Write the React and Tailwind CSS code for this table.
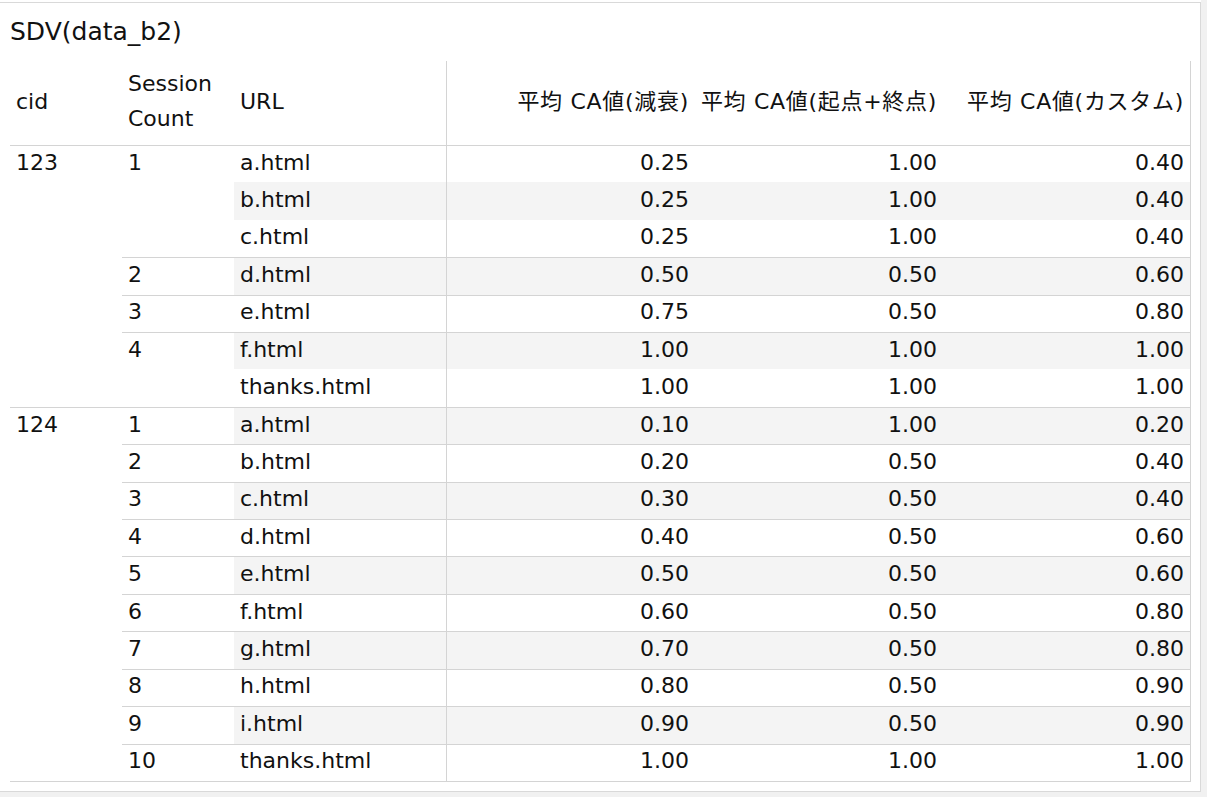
import React from "react";

const data = [
  {
    cid: "123",
    sessions: [
      { s: "1", rows: [["a.html", "0.25", "1.00", "0.40"], ["b.html", "0.25", "1.00", "0.40"], ["c.html", "0.25", "1.00", "0.40"]] },
      { s: "2", rows: [["d.html", "0.50", "0.50", "0.60"]] },
      { s: "3", rows: [["e.html", "0.75", "0.50", "0.80"]] },
      { s: "4", rows: [["f.html", "1.00", "1.00", "1.00"], ["thanks.html", "1.00", "1.00", "1.00"]] },
    ],
  },
  {
    cid: "124",
    sessions: [
      { s: "1", rows: [["a.html", "0.10", "1.00", "0.20"]] },
      { s: "2", rows: [["b.html", "0.20", "0.50", "0.40"]] },
      { s: "3", rows: [["c.html", "0.30", "0.50", "0.40"]] },
      { s: "4", rows: [["d.html", "0.40", "0.50", "0.60"]] },
      { s: "5", rows: [["e.html", "0.50", "0.50", "0.60"]] },
      { s: "6", rows: [["f.html", "0.60", "0.50", "0.80"]] },
      { s: "7", rows: [["g.html", "0.70", "0.50", "0.80"]] },
      { s: "8", rows: [["h.html", "0.80", "0.50", "0.90"]] },
      { s: "9", rows: [["i.html", "0.90", "0.50", "0.90"]] },
      { s: "10", rows: [["thanks.html", "1.00", "1.00", "1.00"]] },
    ],
  },
];

const spanClass = {
  1: "row-span-1",
  2: "row-span-2",
  3: "row-span-3",
  7: "row-span-7",
  10: "row-span-10",
};

export default function App() {
  const cells = [];
  let rowIndex = 0;
  data.forEach((g) => {
    const total = g.sessions.reduce((a, s) => a + s.rows.length, 0);
    cells.push(
      <div key={"cid" + g.cid} className={`col-start-1 ${spanClass[total]} border-t border-[#d4d4d4] pl-[6px]`}>
        <div className="h-[36.41px] flex items-center pb-[4px]">{g.cid}</div>
      </div>
    );
    g.sessions.forEach((sess) => {
      cells.push(
        <div key={"s" + g.cid + sess.s} className={`col-start-2 ${spanClass[sess.rows.length]} border-t border-[#d4d4d4] pl-[6px]`}>
          <div className="h-[36.41px] flex items-center pb-[4px]">{sess.s}</div>
        </div>
      );
      sess.rows.forEach((r, i) => {
        const band = rowIndex % 2 === 1 ? "bg-[#f4f4f4]" : "bg-white";
        const top = i === 0 ? "border-t border-[#d4d4d4]" : "";
        const k = "r" + rowIndex;
        cells.push(
          <div key={k + "u"} className={`col-start-3 ${band} ${top} border-r border-r-[#d4d4d4] pl-[6px] pb-[4px] flex items-center`}>
            {r[0]}
          </div>
        );
        cells.push(
          <div key={k + "a"} className={`col-start-4 ${band} ${top} pr-[6px] pb-[4px] flex items-center justify-end`}>
            {r[1]}
          </div>
        );
        cells.push(
          <div key={k + "b"} className={`col-start-5 ${band} ${top} pr-[6px] pb-[4px] flex items-center justify-end`}>
            {r[2]}
          </div>
        );
        cells.push(
          <div key={k + "c"} className={`col-start-6 ${band} ${top} pr-[6px] pb-[4px] flex items-center justify-end`}>
            {r[3]}
          </div>
        );
        rowIndex++;
      });
    });
  });

  return (
    <div
      className="w-[1207px] h-[797px] bg-[#f1f1f1] overflow-hidden text-[#111]"
      style={{ fontFamily: '"DejaVu Sans", "Noto Sans CJK JP", sans-serif' }}
    >
      <div className="w-[1201px] bg-white pt-[2px]">
        <div className="h-[790px] border-t border-r border-b border-[#d9d9d9] bg-white">
          <div className="h-[58px] flex items-center pl-[10px] text-[25px]">SDV(data_b2)</div>
          <div className="ml-[10px] w-[1181px] border-r border-b border-[#d4d4d4] text-[22px]">
            <div className="flex h-[84px] pb-[4px]">
              <div className="w-[112px] pl-[6px] flex items-center">cid</div>
              <div className="w-[112px] pl-[6px] flex items-center leading-[35px]">
                Session
                <br />
                Count
              </div>
              <div className="w-[213px] border-r border-[#d4d4d4] pl-[6px] flex items-center -mb-[4px] pb-[4px]">URL</div>
              <div className="w-[248px] pr-[6px] flex items-center justify-end whitespace-nowrap tracking-[0.7px]">平均 CA値(減衰)</div>
              <div className="w-[248px] pr-[6px] flex items-center justify-end whitespace-nowrap tracking-[0.7px]">平均 CA値(起点+終点)</div>
              <div className="w-[247px] pr-[6px] flex items-center justify-end whitespace-nowrap tracking-[0.7px]">平均 CA値(カスタム)</div>
            </div>
            <div className="grid grid-cols-[112px_112px_213px_248px_248px_247px] auto-rows-[37.41px]">
              {cells}
            </div>
          </div>
        </div>
      </div>
    </div>
  );
}
